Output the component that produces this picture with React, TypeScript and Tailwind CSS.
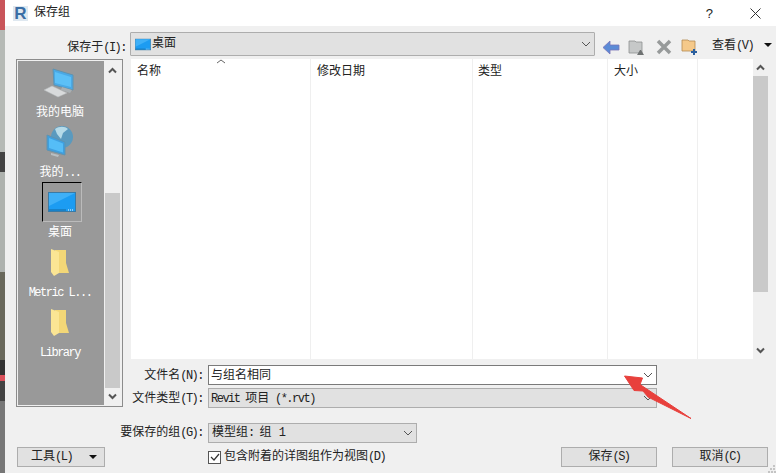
const font = "font-['Liberation_Mono','Noto_Sans_CJK_SC',monospace] text-[12px] leading-none text-[#222]"

// half width latin letters, like the dialog's bitmap font
function Lat({ children }: { children: string }) {
  return <span className="tracking-[-1.5px]">{children}</span>
}

function Chevron({ color = "#555", wide = 10 }: { color?: string; wide?: number }) {
  return (
    <svg width={wide} height="6" viewBox="0 0 10 6" fill="none">
      <path d="M1 1l4 4 4-4" stroke={color} strokeWidth="1" />
    </svg>
  )
}

function ScrollArrow({ up }: { up?: boolean }) {
  return (
    <svg width="9" height="7" viewBox="0 0 9 7" fill="none">
      <path d={up ? "M1 5.5l3.5-3.5 3.5 3.5" : "M1 1.5l3.5 3.5 3.5-3.5"} stroke="#555" strokeWidth="2" />
    </svg>
  )
}

function Caret() {
  return <div className="h-0 w-0 border-x-[4px] border-t-[4px] border-x-transparent border-t-[#111]" />
}

function DesktopIcon({ w, h }: { w: number; h: number }) {
  return (
    <svg width={w} height={h} viewBox="0 0 28 20">
      <rect x="0.5" y="0.5" width="27" height="19" fill="#1c9cf2" stroke="#3a7aa5" />
      <path d="M1 1h26L1 14z" fill="#3fb0f7" />
      <path d="M20 18h1m1 0h1m1 0h1" stroke="#fff" />
      <path d="M1 18h17" stroke="#14689f" />
    </svg>
  )
}

function ComputerIcon() {
  return (
    <svg width="36" height="32" viewBox="0 0 36 32">
      <path d="M11 3l20 6v15L12 19z" fill="#4aa9e6" stroke="#5f93b0" strokeWidth="1" />
      <path d="M13 6l16 5v10L13 17z" fill="#5cc0f7" />
      <path d="M20 21l10 3-2 3-9-3z" fill="#aab0b3" />
      <path d="M2 24l8-4 15 7-9 4z" fill="#d8dadb" stroke="#b5b8ba" strokeWidth="0.5" />
    </svg>
  )
}

function NetworkIcon() {
  return (
    <svg width="36" height="32" viewBox="0 0 36 32">
      <circle cx="20" cy="11" r="11" fill="#5a9abf" />
      <path d="M13 3c4-3 10-3 13 0l-5 4-2 6-4-5z" fill="#b5dae8" />
      <path d="M5 9l18 7v13L5 24z" fill="#3f9fdf" stroke="#5f93b0" strokeWidth="1" />
      <path d="M7 12l14 5.500v9L7 22z" fill="#55bdf7" />
      <path d="M9 27l8 2-1 2-7-2z" fill="#b9bfc2" />
    </svg>
  )
}

function FolderIcon() {
  return (
    <svg width="20" height="29" viewBox="0 0 20 29">
      <path d="M5 2h11v13l3 10H6z" fill="#f3d777" />
      <path d="M1 1l8 3v21l-5 3-3-4z" fill="#fbe594" />
    </svg>
  )
}

function PlaceItem({ label, selected, children }: { label: React.ReactNode; selected?: boolean; children: React.ReactNode }) {
  return (
    <div className="flex h-[60px] flex-col items-center pr-[2px] text-white">
      <div
        className={
          "flex h-[40px] w-[40px] items-center justify-center " +
          (selected ? "ml-[4px] border-t border-l border-t-black border-l-black border-r border-b border-r-[#bbb] border-b-[#bbb]" : "")
        }
      >
        {children}
      </div>
      <div className="mt-[5px] whitespace-nowrap text-white">{label}</div>
    </div>
  )
}

function Places() {
  return (
    <div className="flex h-[348px] w-[107px] border border-[#8c8c8c] bg-[#f0f0f0] p-px">
      <div className="h-full w-[86px] bg-[#999] pt-px">
        <PlaceItem label="我的电脑"><ComputerIcon /></PlaceItem>
        <PlaceItem label={<>我的<Lat>...</Lat></>}><NetworkIcon /></PlaceItem>
        <PlaceItem label="桌面" selected><DesktopIcon w={28} h={20} /></PlaceItem>
        <PlaceItem label={<Lat>Metric L...</Lat>}><FolderIcon /></PlaceItem>
        <PlaceItem label={<Lat>Library</Lat>}><FolderIcon /></PlaceItem>
      </div>
      <div className="flex w-[17px] flex-col items-center">
        <div className="flex h-[18px] items-center"><ScrollArrow up /></div>
        <div className="h-[114px]" />
        <div className="w-[15px] flex-1 bg-[#c9c9c9]" />
        <div className="flex h-[17px] items-center"><ScrollArrow /></div>
      </div>
    </div>
  )
}

function FileList() {
  return (
    <div className="relative flex h-[300px] bg-white">
      <div className="relative w-[180px] border-r border-[#efefef] pl-[6px] pt-[7px]">
        名称
        <div className="absolute top-0 left-[85px]">
          <svg width="10" height="5" viewBox="0 0 10 5" fill="none"><path d="M1 4l4-3 4 3" stroke="#666" /></svg>
        </div>
      </div>
      <div className="w-[162px] border-r border-[#efefef] pl-[6px] pt-[7px]">修改日期</div>
      <div className="w-[135px] border-r border-[#efefef] pl-[5px] pt-[7px]">类型</div>
      <div className="w-[90px] border-r border-[#efefef] pl-[6px] pt-[7px]">大小</div>
      <div className="flex-1" />
      <div className="flex w-[15px] flex-col items-center bg-[#f0f0f0]">
        <div className="flex h-[17px] items-center"><ScrollArrow up /></div>
        <div className="h-[216px] w-full bg-[#c9c9c9]" />
        <div className="flex-1" />
        <div className="flex h-[17px] items-center"><ScrollArrow /></div>
      </div>
    </div>
  )
}

function Toolbar() {
  return (
    <div className="flex h-[33px] items-start pt-[6px]">
      <div className="mt-[10px] w-[121px] whitespace-nowrap text-right">保存于<Lat>(I):</Lat></div>
      <div className="ml-[4px] flex h-[24px] w-[465px] items-center rounded-[1px] border border-[#adadad] bg-[#e1e1e1] pl-[4px] pr-[3px]">
        <DesktopIcon w={16} h={13} />
        <span className="ml-px text-[12px]">桌面</span>
        <div className="ml-auto"><Chevron /></div>
      </div>
      <div className="ml-[7px] mt-[6px] flex items-center gap-[8px]">
        <svg width="18" height="15" viewBox="0 0 18 15">
          <path d="M8 1L1 7.500 8 14v-4h9V5H8z" fill="#5b8bd6" stroke="#7a74b8" strokeWidth="0.8" />
        </svg>
        <svg width="18" height="17" viewBox="0 0 18 17">
          <path d="M1 2h6l1 1h6v11H1z" fill="#c6c8c8" stroke="#8d9090" strokeWidth="0.8" />
          <path d="M9 16l3-5h1l3 5z" fill="#6f7272" />
        </svg>
        <svg className="ml-[2px]" width="16" height="16" viewBox="0 0 16 16">
          <path d="M2 2l12 12M14 2L2 14" stroke="#979a9a" strokeWidth="3.500" />
        </svg>
        <svg className="ml-[1px]" width="18" height="18" viewBox="0 0 18 18">
          <path d="M1 2h6l1 1h6v10H1z" fill="#f5c98a" stroke="#b48a50" strokeWidth="0.8" />
          <path d="M13 11v6M10 14h6" stroke="#2b5f9e" strokeWidth="2" />
        </svg>
      </div>
      <div className="ml-[13px] mt-[8px] whitespace-nowrap">查看<Lat>(V)</Lat></div>
      <div className="ml-[11px] mt-[11px]"><Caret /></div>
    </div>
  )
}

function Field({ label, white, children }: { label: React.ReactNode; white?: boolean; children: React.ReactNode }) {
  return (
    <div className="flex items-center">
      <div className="w-[72px] whitespace-nowrap pt-px text-right">{label}</div>
      <div
        className={
          "ml-[5px] flex h-[20px] w-[449px] items-center justify-between pl-[2px] pr-[3px] border " +
          (white ? "border-[#7a7a7a] bg-white" : "border-[#adadad] bg-[#e1e1e1]")
        }
      >
        <span className="whitespace-nowrap pt-px">{children}</span>
        <Chevron />
      </div>
    </div>
  )
}

function Arrow() {
  return (
    <svg className="absolute top-[370px] left-[620px]" width="76" height="54" viewBox="0 0 76 54">
      <path d="M4.500 6L22.500 8 20 14.500 71 48.500 28 27 23 21 14 20.500z" fill="#e8403c" stroke="#e8403c" strokeWidth="1" strokeLinejoin="round" />
    </svg>
  )
}

export default function App() {
  return (
    <div className={"relative flex h-[473px] w-[776px] overflow-hidden " + font}>
      <div className="flex w-[5px] shrink-0 flex-col">
        <div className="h-[30px] bg-[#c9555a]" />
        <div className="h-[122px] bg-[#b6bab6]" />
        <div className="h-[20px] bg-[#444]" />
        <div className="h-[100px] bg-[#aeb2ae]" />
        <div className="h-[88px] bg-[#6a695c]" />
        <div className="h-[15px] bg-[#333]" />
        <div className="h-[6px] bg-[#d9505a]" />
        <div className="h-[20px] bg-[#444]" />
        <div className="flex-1 bg-[#777]" />
      </div>

      <div className="flex min-w-0 flex-1 flex-col bg-[#f0f0f0]">
        <div className="flex h-[26px] items-center bg-white pl-[8px]">
          <div className="flex h-[15px] w-[15px] items-center justify-center bg-[#dfe8f0] font-['Liberation_Sans',sans-serif] text-[17px] font-bold text-[#3a6ea5]">R</div>
          <span className="ml-[6px]">保存组</span>
          <span className="ml-auto text-[13px] font-['Liberation_Sans',sans-serif]">?</span>
          <svg className="ml-[37px] mr-[15px]" width="11" height="11" viewBox="0 0 11 11" fill="none">
            <path d="M.5.5l10 10M10.500.5l-10 10" stroke="#333" />
          </svg>
        </div>

        <Toolbar />

        <div className="flex pl-[11px]">
          <Places />
          <div className="ml-[8px] w-[637px]">
            <FileList />
            <div className="mt-[6px] flex flex-col gap-[3px]">
              <Field label={<>文件名<Lat>(N):</Lat></>} white>与组名相同</Field>
              <Field label={<>文件类型<Lat>(T):</Lat></>}><Lat>Revit </Lat>项目<Lat> (*.rvt)</Lat></Field>
            </div>
          </div>
        </div>

        <div className="mt-[15px] flex items-center pl-[11px]">
          <div className="w-[187px] whitespace-nowrap text-right">要保存的组<Lat>(G):</Lat></div>
          <div className="ml-[5px] flex h-[20px] w-[209px] items-center justify-between border border-[#adadad] bg-[#e1e1e1] pl-[3px] pr-[3px]">
            <span>模型组<Lat>: </Lat>组 <Lat>1</Lat></span>
            <Chevron />
          </div>
        </div>

        <div className="mt-[4px] flex items-center pl-[12px]">
          <div className="flex h-[20px] w-[88px] items-center border border-[#adadad] bg-[#e1e1e1] pl-[13px] pr-[7px]">
            工具<Lat>(L)</Lat>
            <div className="ml-auto"><Caret /></div>
          </div>
          <div className="ml-[103px] flex h-[13px] w-[13px] items-center justify-center border border-[#555] bg-white">
            <svg width="10" height="9" viewBox="0 0 10 9" fill="none"><path d="M1 4l3 3 5-6" stroke="#333" strokeWidth="1.200" /></svg>
          </div>
          <span className="ml-[3px] whitespace-nowrap">包含附着的详图组作为视图<Lat>(D)</Lat></span>
          <div className="ml-auto flex gap-[15px] pr-[8px]">
            <div className="flex h-[20px] w-[96px] items-center justify-center border border-[#adadad] bg-[#e1e1e1]">保存<Lat>(S)</Lat></div>
            <div className="flex h-[20px] w-[96px] items-center justify-center border border-[#adadad] bg-[#e1e1e1]">取消<Lat>(C)</Lat></div>
          </div>
        </div>
      </div>

      <svg className="absolute right-0 bottom-0" width="8" height="8" viewBox="0 0 8 8" fill="#c4c4c4">
        <rect x="5" y="0" width="2" height="2" />
        <rect x="2" y="3" width="2" height="2" />
        <rect x="5" y="3" width="2" height="2" />
        <rect x="0" y="6" width="2" height="2" />
        <rect x="3" y="6" width="2" height="2" />
        <rect x="6" y="6" width="2" height="2" />
      </svg>

      <Arrow />
    </div>
  )
}
